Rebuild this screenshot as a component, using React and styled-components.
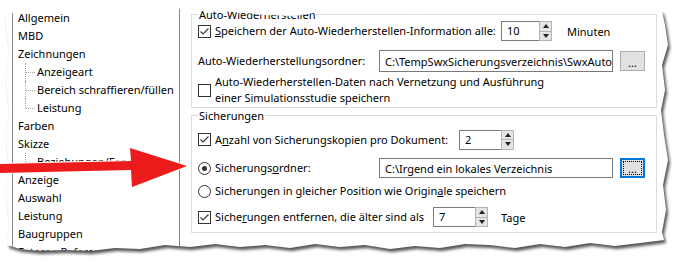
import React from 'react';
import styled, { createGlobalStyle } from 'styled-components';

const Global = createGlobalStyle`
  body {
    margin: 0;
    background: #fff;
    font-family: 'Segoe UI', 'Noto Sans', sans-serif;
    font-size: 11px;
    color: #000;
  }
`;

const Frame = styled.div`
  position: relative;
  width: 676px;
  height: 260px;
  overflow: hidden;
  background: #fff;
`;

const Paper = styled.div`
  display: flex;
  gap: 11px;
  padding-left: 12px;
  height: 100%;
`;

const Tree = styled.div`
  flex-shrink: 0;
  width: 168px;
  height: 290px;
  margin-top: 6px;
  box-sizing: border-box;
  border: 1px solid #828790;
  padding: 2px 0 0 5px;
`;

const TreeRow = styled.div`
  position: relative;
  height: 18px;
  line-height: 18px;
  white-space: nowrap;
  padding-left: ${p => (p.$child ? 19 : 0)}px;
  ${p =>
    p.$child &&
    `
    &::before {
      content: '';
      position: absolute;
      left: 7px;
      top: 0;
      height: ${p.$last ? 9 : 18}px;
      border-left: 1px dotted #a0a0a0;
    }
    &::after {
      content: '';
      position: absolute;
      left: 8px;
      top: 9px;
      width: 9px;
      border-top: 1px dotted #a0a0a0;
    }
  `}
`;

const Right = styled.div`
  width: 466px;
  display: flex;
  flex-direction: column;
  padding-top: 14px;
`;

const GroupBox = styled.div`
  position: relative;
  box-sizing: border-box;
  border: 1px solid #dcdcdc;
  height: ${p => p.$h}px;
  margin-top: ${p => p.$mt || 0}px;
  padding: ${p => p.$pt}px 0 0 6px;
`;

const GroupTitle = styled.span`
  position: absolute;
  top: -8px;
  left: 6px;
  padding: 0 1px;
  line-height: 16px;
  background: #fff;
`;

const Row = styled.div`
  display: flex;
  align-items: center;
  height: ${p => p.$h}px;
  margin-top: ${p => p.$mt || 0}px;
`;

const Cell = styled.div`
  flex-shrink: 0;
  width: ${p => p.$w}px;
  display: flex;
  align-items: center;
  white-space: nowrap;
`;

const Label = styled.span`
  line-height: 16px;
  white-space: nowrap;
`;

const Box = styled.span`
  flex-shrink: 0;
  width: 13px;
  height: 13px;
  box-sizing: border-box;
  border: 1px solid #333;
  background: #fff;
  margin-right: 4px;
  display: flex;
  align-items: center;
  justify-content: center;
  border-radius: ${p => (p.$round ? '50%' : '0')};
`;

const Dot = styled.span`
  width: 5px;
  height: 5px;
  border-radius: 50%;
  background: #333;
`;

const Unit = styled.span`
  margin-left: ${p => p.$ml}px;
  white-space: nowrap;
`;

const Spin = styled.div`
  flex-shrink: 0;
  display: flex;
  width: ${p => p.$w}px;
  height: 20px;
  box-sizing: border-box;
  border: 1px solid #7a7a7a;
  background: #fff;
`;

const SpinValue = styled.span`
  flex: 1;
  padding-left: 5px;
  line-height: 18px;
`;

const SpinButtons = styled.div`
  width: 12px;
  display: flex;
  flex-direction: column;
`;

const SpinButton = styled.div`
  flex: 1;
  display: flex;
  align-items: center;
  justify-content: center;
  background: #e5e5e5;
  border: 1px solid #b4b4b4;
  border-top-width: ${p => (p.$down ? 0 : 1)}px;
  margin: -1px -1px 0 0;
  &:last-child {
    margin: 0 -1px -1px 0;
  }
`;

const TextField = styled.div`
  flex-shrink: 0;
  width: 234px;
  height: ${p => p.$h}px;
  box-sizing: border-box;
  border: 1px solid #7a7a7a;
  padding-left: 5px;
  display: flex;
  align-items: center;
  white-space: nowrap;
  overflow: hidden;
`;

const Browse = styled.div`
  position: relative;
  flex-shrink: 0;
  margin-left: 7px;
  width: 25px;
  height: 20px;
  box-sizing: border-box;
  border: ${p => (p.$focus ? '2px solid #0078d7' : '1px solid #adadad')};
  background: #e1e1e1;
  display: flex;
  align-items: flex-end;
  justify-content: center;
  line-height: 14px;
  ${p =>
    p.$focus &&
    `
    &::after {
      content: '';
      position: absolute;
      inset: 1px;
      border: 1px dotted #000;
    }
  `}
`;

const Overlay = styled.svg`
  position: absolute;
  left: 0;
  top: 0;
  pointer-events: none;
`;

const Check = ({ on }) => (
  <Box>
    {on && (
      <svg width="11" height="11" viewBox="0 0 11 11">
        <polyline points="1.5,5.5 4,8 9.5,2.5" fill="none" stroke="#333" strokeWidth="1.1" />
      </svg>
    )}
  </Box>
);

const Radio = ({ on }) => <Box $round>{on && <Dot />}</Box>;

const SpinBox = ({ w, value }) => (
  <Spin $w={w}>
    <SpinValue>{value}</SpinValue>
    <SpinButtons>
      <SpinButton>
        <svg width="6" height="4" viewBox="0 0 6 4"><polygon points="0,4 6,4 3,0" fill="#222" /></svg>
      </SpinButton>
      <SpinButton $down>
        <svg width="6" height="4" viewBox="0 0 6 4"><polygon points="0,0 6,0 3,4" fill="#222" /></svg>
      </SpinButton>
    </SpinButtons>
  </Spin>
);

const tree = [
  { t: 'Allgemein' },
  { t: 'MBD' },
  { t: 'Zeichnungen' },
  { t: 'Anzeigeart', c: true },
  { t: 'Bereich schraffieren/füllen', c: true },
  { t: 'Leistung', c: true, last: true },
  { t: 'Farben' },
  { t: 'Skizze' },
  { t: 'Beziehungen/Fang', c: true, last: true },
  { t: 'Anzeige' },
  { t: 'Auswahl' },
  { t: 'Leistung' },
  { t: 'Baugruppen' },
  { t: 'Externe Referenzen' }
];

// outline of the torn-off screenshot piece
const edge = [
  [5, 14], [25, 11], [45, 8], [70, 10], [95, 12], [120, 10], [145, 11], [170, 8],
  [195, 10], [220, 11], [245, 13], [265, 15], [295, 16], [320, 12], [345, 10],
  [370, 8], [395, 9], [420, 11], [445, 12], [470, 10], [495, 8], [520, 10],
  [545, 11], [570, 8], [595, 9], [620, 7], [645, 8], [662, 11],
  [665, 25], [668, 45], [662, 65], [665, 90], [661, 110], [664, 135], [668, 160],
  [663, 185], [666, 210], [662, 232], [664, 240],
  [640, 243], [615, 246], [590, 243], [565, 247], [540, 244], [515, 248],
  [490, 245], [465, 244], [440, 248], [415, 246], [390, 249], [365, 245],
  [340, 247], [315, 244], [290, 248], [265, 245], [240, 247], [215, 244],
  [190, 247], [165, 245], [140, 249], [115, 248], [90, 251], [65, 250],
  [40, 251], [20, 249], [7, 245],
  [9, 220], [6, 195], [9, 170], [6, 140], [9, 110], [6, 80], [9, 50], [6, 25]
];

const pts = edge.map(p => p.join(',')).join(' ');
const edgePath = 'M' + edge.map(p => p.join(' ')).join(' L') + ' Z';

const TornEdge = () => (
  <Overlay width="676" height="260" viewBox="0 0 676 260">
    <defs>
      <clipPath id="outside">
        <path clipRule="evenodd" d={`M0 0 H676 V260 H0 Z ${edgePath}`} />
      </clipPath>
      <filter id="soft" x="-5%" y="-5%" width="110%" height="110%">
        <feGaussianBlur stdDeviation="1.6" />
      </filter>
    </defs>
    <g clipPath="url(#outside)">
      <rect width="676" height="260" fill="#fff" />
      <polygon points={pts} fill="#555" filter="url(#soft)" transform="translate(2,3)" />
    </g>
    <polygon
      points="0,164 131,161 130,148 187,166 132,187 131,170 0,173"
      fill="#ec1c1c"
      stroke="#fff"
      strokeWidth="2"
      paintOrder="stroke"
    />
  </Overlay>
);

export default function App() {
  return (
    <Frame>
      <Global />
      <Paper>
        <Tree>
          {tree.map((n, i) => (
            <TreeRow key={i} $child={n.c} $last={n.last}>
              {n.t}
            </TreeRow>
          ))}
        </Tree>
        <Right>
          <GroupBox $h={94} $pt={6}>
            <GroupTitle>Auto-Wiederherstellen</GroupTitle>
            <Row $h={20}>
              <Cell $w={303}>
                <Check on />
                <Label><u>S</u>peichern der Auto-Wiederherstellen-Information alle:</Label>
              </Cell>
              <SpinBox w={51} value="10" />
              <Unit $ml={15}>Minuten</Unit>
            </Row>
            <Row $h={22} $mt={9}>
              <Cell $w={181}>
                <Label>Auto-Wiederherstellungsordner:</Label>
              </Cell>
              <TextField $h={22}>C:\TempSwxSicherungsverzeichnis\SwxAuto</TextField>
              <Browse>...</Browse>
            </Row>
            <Row $h={32} $mt={2}>
              <Check />
              <Label>
                Auto-Wiederherstellen-Daten nach Vernetzung und Ausführung
                <br />
                einer Simulationsstudie speichern
              </Label>
            </Row>
          </GroupBox>
          <GroupBox $h={118} $mt={7} $pt={14}>
            <GroupTitle>Sicherungen</GroupTitle>
            <Row $h={19}>
              <Cell $w={261}>
                <Check on />
                <Label>A<u>n</u>zahl von Sicherungskopien pro Dokument:</Label>
              </Cell>
              <SpinBox w={55} value="2" />
            </Row>
            <Row $h={20} $mt={9}>
              <Cell $w={181}>
                <Radio on />
                <Label>Sicherungs<u>o</u>rdner:</Label>
              </Cell>
              <TextField $h={20}>C:\Irgend ein lokales Verzeichnis</TextField>
              <Browse $focus>...</Browse>
            </Row>
            <Row $h={16} $mt={5}>
              <Radio />
              <Label>Sicherungen in gleicher Position wie Origin<u>a</u>le speichern</Label>
            </Row>
            <Row $h={20} $mt={8}>
              <Cell $w={235}>
                <Check on />
                <Label>Siche<u>r</u>ungen entfernen, die älter sind als</Label>
              </Cell>
              <SpinBox w={55} value="7" />
              <Unit $ml={13}>Tage</Unit>
            </Row>
          </GroupBox>
        </Right>
      </Paper>
      <TornEdge />
    </Frame>
  );
}
